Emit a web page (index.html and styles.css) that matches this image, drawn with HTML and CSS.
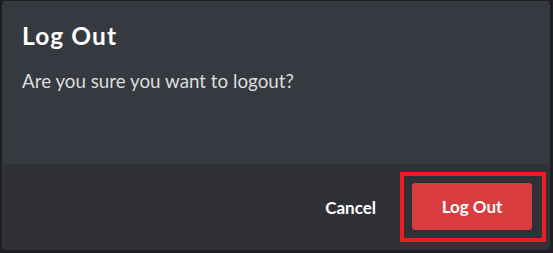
FILE: index.html
```html
<!DOCTYPE html>
<html lang="en">
<head>
<meta charset="utf-8">
<link rel="stylesheet" href="styles.css">
<title>Log Out</title>
</head>
<body>
<div class="modal">
  <div class="content">
    <h2 class="title">Log Out</h2>
    <p class="message">Are you sure you want to logout?</p>
  </div>
  <div class="footer">
    <button class="cancel" type="button">Cancel</button>
    <span class="highlight">
      <button class="confirm" type="button">Log Out</button>
    </span>
  </div>
</div>
</body>
</html>
```
FILE: styles.css
```css
html, body {
  margin: 0;
  padding: 0;
  background: #1e1f22;
  width: 553px;
  height: 253px;
  overflow: hidden;
}
body {
  padding: 1px 3px 3px 2px;
  box-sizing: border-box;
  font-family: Lato, "Open Sans", sans-serif;
}
.modal {
  width: 548px;
  height: 249px;
  border-radius: 4px;
  overflow: hidden;
  display: flex;
  flex-direction: column;
  background: #36393f;
}
.content {
  height: 163px;
  box-sizing: border-box;
  padding: 20px 20px 0 20px;
}
.title {
  margin: 0;
  font-size: 24.5px;
  line-height: 30px;
  font-weight: 700;
  letter-spacing: 1.1px;
  color: #ffffff;
}
.message {
  margin: 18px 0 0 0;
  font-size: 18.8px;
  line-height: 24px;
  color: #dcddde;
}
.footer {
  flex: 1;
  background: #2f3136;
  display: flex;
  justify-content: flex-end;
  align-items: center;
  padding-right: 4px;
}
.cancel {
  background: none;
  border: none;
  color: #ffffff;
  font-family: inherit;
  font-size: 17px;
  font-weight: 700;
  padding: 0;
  margin-right: 24px;
}
.highlight {
  display: block;
  border: 4px solid #ed1c24;
  padding: 7px 10px 8px 8px;
}
.confirm {
  display: block;
  width: 120px;
  height: 47px;
  background: #d83c3e;
  border: none;
  border-radius: 3px;
  color: #ffffff;
  font-family: inherit;
  font-size: 17px;
  font-weight: 700;
  padding: 0;
}
```
